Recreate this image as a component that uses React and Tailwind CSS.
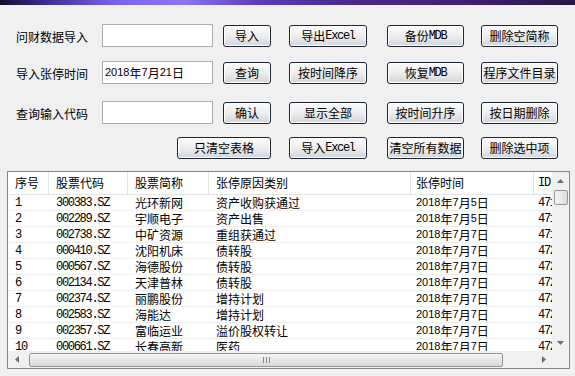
import React from "react";

const CJK = "font-['Noto_Sans_CJK_SC',sans-serif] text-[12px]";
const MONO = "font-['Liberation_Mono',monospace] text-[12px] tracking-[-1.3px]";
const SANS = "font-['Liberation_Sans',sans-serif] text-[11px]";

function Txt({ s, latin = "mono" }) {
  return s
    .split(/([\x00-\x7f]+)/)
    .filter(Boolean)
    .map((p, i) =>
      /^[\x00-\x7f]+$/.test(p) ? (
        <span key={i} className={latin === "sans" ? SANS : MONO}>
          {p}
        </span>
      ) : (
        <span key={i} className={CJK}>
          {p}
        </span>
      )
    );
}

function Btn({ label, w, ml }) {
  return (
    <div
      className={`flex h-[22px] shrink-0 items-center justify-center rounded-[3px] border border-[#1b2636] bg-gradient-to-b from-[#fcfcfc] via-[#ededed] to-[#d3d5dc] leading-none text-black shadow-[inset_0_0_0_1px_#ffffff] ${w} ${ml}`}
    >
      <Txt s={label} />
    </div>
  );
}

function Input({ value }) {
  return (
    <div className="flex h-[23px] w-[111px] shrink-0 items-center border border-[#abadb3] bg-white pl-[2px] leading-none text-black">
      {value ? <Txt s={value} latin="sans" /> : null}
    </div>
  );
}

const rows = [
  ["1", "300383.SZ", "光环新网", "资产收购获通过", "2018年7月5日", "4711"],
  ["2", "002289.SZ", "宇顺电子", "资产出售", "2018年7月5日", "4711"],
  ["3", "002738.SZ", "中矿资源", "重组获通过", "2018年7月7日", "4711"],
  ["4", "000410.SZ", "沈阳机床", "债转股", "2018年7月7日", "4720"],
  ["5", "000567.SZ", "海德股份", "债转股", "2018年7月7日", "4721"],
  ["6", "002134.SZ", "天津普林", "债转股", "2018年7月7日", "4722"],
  ["7", "002374.SZ", "丽鹏股份", "增持计划", "2018年7月7日", "4723"],
  ["8", "002583.SZ", "海能达", "增持计划", "2018年7月7日", "4724"],
  ["9", "002357.SZ", "富临运业", "溢价股权转让", "2018年7月7日", "4725"],
  ["10", "000661.SZ", "长春高新", "医药", "2018年7月7日", "4726"],
];

const cols = [
  "w-[41px] pl-[7px]",
  "w-[79px] pl-[7px]",
  "w-[81px] pl-[7px]",
  "w-[202px] pl-[7px]",
  "w-[123px] pl-[5px]",
  "w-[60px] pl-[4px]",
];

const headers = ["序号", "股票代码", "股票简称", "张停原因类别", "张停时间", "ID"];

function Arrow({ dir }) {
  const pts = {
    up: "0,4 3.5,0 7,4",
    down: "0,0 3.5,4 7,0",
    left: "4,0 0,3.5 4,7",
    right: "0,0 4,3.5 0,7",
  }[dir];
  const vert = dir === "up" || dir === "down";
  return (
    <svg width={vert ? 7 : 4} height={vert ? 4 : 7} viewBox={vert ? "0 0 7 4" : "0 0 4 7"}>
      <polygon points={pts} fill="#6d6d6d" />
    </svg>
  );
}

export default function App() {
  return (
    <div className="h-[376px] w-[575px] overflow-hidden bg-[#f0f0f0] text-black">
      <div className="h-[5px] w-full bg-[linear-gradient(90deg,#150c2c_0%,#3b2c95_8%,#7b62f2_20%,#8b74f4_32%,#5a3cc0_45%,#4a2a8c_60%,#3e2070_82%,#2a1642_100%)]" />

      {/* Row 1 */}
      <div className="mt-[19px] flex h-[23px] items-center pl-[16px]">
        <div className="w-[86px] shrink-0 leading-none">
          <Txt s="问财数据导入" />
        </div>
        <Input />
        <Btn label="导入" w="w-[48px]" ml="ml-[10px]" />
        <Btn label="导出Excel" w="w-[78px]" ml="ml-[18px]" />
        <Btn label="备份MDB" w="w-[77px]" ml="ml-[20px]" />
        <Btn label="删除空简称" w="w-[77px]" ml="ml-[17px]" />
      </div>

      {/* Row 2 */}
      <div className="mt-[14px] flex h-[23px] items-center pl-[16px]">
        <div className="w-[86px] shrink-0 leading-none">
          <Txt s="导入张停时间" />
        </div>
        <Input value="2018年7月21日" />
        <Btn label="查询" w="w-[48px]" ml="ml-[10px]" />
        <Btn label="按时间降序" w="w-[78px]" ml="ml-[18px]" />
        <Btn label="恢复MDB" w="w-[77px]" ml="ml-[20px]" />
        <Btn label="程序文件目录" w="w-[77px]" ml="ml-[17px]" />
      </div>

      {/* Row 3 */}
      <div className="mt-[17px] flex h-[23px] items-center pl-[16px]">
        <div className="w-[86px] shrink-0 leading-none">
          <Txt s="查询输入代码" />
        </div>
        <Input />
        <Btn label="确认" w="w-[48px]" ml="ml-[10px]" />
        <Btn label="显示全部" w="w-[78px]" ml="ml-[18px]" />
        <Btn label="按时间升序" w="w-[77px]" ml="ml-[20px]" />
        <Btn label="按日期删除" w="w-[77px]" ml="ml-[17px]" />
      </div>

      {/* Row 4 */}
      <div className="mt-[12px] flex h-[23px] items-center pl-[177px]">
        <Btn label="只清空表格" w="w-[94px]" ml="ml-0" />
        <Btn label="导入Excel" w="w-[78px]" ml="ml-[18px]" />
        <Btn label="清空所有数据" w="w-[77px]" ml="ml-[20px]" />
        <Btn label="删除选中项" w="w-[77px]" ml="ml-[17px]" />
      </div>

      {/* Table */}
      <div className="ml-[7px] mt-[12px] flex h-[198px] w-[563px] flex-col border border-[#828790] bg-white">
        <div className="flex h-[179px]">
          <div className="flex-1 overflow-hidden">
            <div className="flex h-[23px] border-b border-[#e5e5e5] leading-none">
              {headers.map((h, i) => (
                <div
                  key={i}
                  className={`flex shrink-0 items-center ${cols[i]} ${i < 5 ? "border-r border-[#e5e5e5]" : ""}`}
                >
                  <Txt s={h} />
                </div>
              ))}
            </div>
            {rows.map((r, ri) => (
              <div key={ri} className="flex h-[16px] border-b border-[#f0f0f0] leading-none">
                {r.map((c, ci) => (
                  <div
                    key={ci}
                    className={`flex shrink-0 items-center overflow-hidden whitespace-nowrap ${cols[ci]}`}
                  >
                    <Txt s={c} latin={ci === 4 ? "sans" : "mono"} />
                  </div>
                ))}
              </div>
            ))}
          </div>
          {/* vertical scrollbar */}
          <div className="flex w-[17px] shrink-0 flex-col bg-[#f0f0f0]">
            <div className="flex h-[17px] items-center justify-center">
              <Arrow dir="up" />
            </div>
            <div className="mx-auto mt-[1px] h-[15px] w-[14px] rounded-[2px] border border-[#979797] bg-gradient-to-r from-[#f6f6f6] to-[#dcdcdc]" />
            <div className="flex-1" />
            <div className="flex h-[17px] items-center justify-center">
              <Arrow dir="down" />
            </div>
          </div>
        </div>
        {/* horizontal scrollbar */}
        <div className="flex h-[17px]">
          <div className="flex flex-1 items-center bg-[#f0f0f0]">
            <div className="flex h-[17px] w-[17px] shrink-0 items-center justify-center">
              <Arrow dir="left" />
            </div>
            <div className="ml-[4px] flex h-[14px] w-[474px] shrink-0 items-center justify-center rounded-[2px] border border-[#979797] bg-gradient-to-b from-[#f6f6f6] to-[#d8d8d8]">
              <div className="flex gap-[2px]">
                <div className="h-[6px] w-[1px] bg-[#8a8a8a]" />
                <div className="h-[6px] w-[1px] bg-[#8a8a8a]" />
                <div className="h-[6px] w-[1px] bg-[#8a8a8a]" />
              </div>
            </div>
            <div className="flex-1" />
            <div className="flex h-[17px] w-[17px] shrink-0 items-center justify-center">
              <Arrow dir="right" />
            </div>
          </div>
          <div className="w-[17px] shrink-0 bg-[#f0f0f0]" />
        </div>
      </div>
    </div>
  );
}
